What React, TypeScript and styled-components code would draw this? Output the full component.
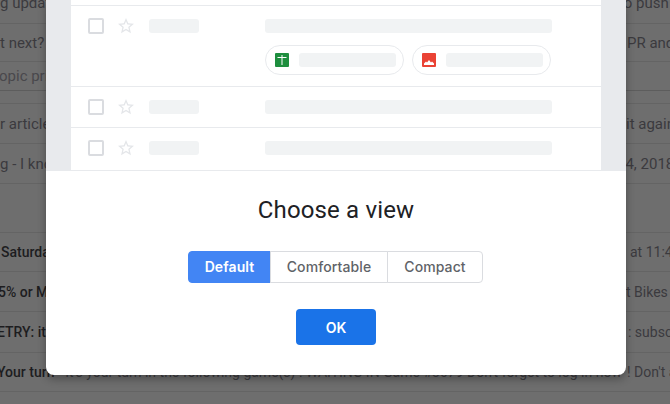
import React from 'react';
import styled, {createGlobalStyle} from 'styled-components';

const GlobalStyle = createGlobalStyle`
    html, body {
        margin: 0;
        height: 100%;
        overflow: hidden;
        background: #6e6e6e;
    }
    * {
        box-sizing: border-box;
    }
`;

const Page = styled.div`
    position: relative;
    width: 670px;
    height: 404px;
    overflow: hidden;
    font-family: Roboto, "Liberation Sans", sans-serif;
`;

const InboxList = styled.div`
    display: flex;
    flex-direction: column;
    margin-top: -17px;
`;

const InboxRow = styled.div<{$height: number; $faded?: boolean; $compact?: boolean}>`
    display: grid;
    grid-template-columns: 620px 50px;
    align-items: center;
    height: ${props => props.$height}px;
    border-bottom: 1px solid ${props => (props.$faded ? '#5d5d5d' : '#646464')};
    font-size: ${props => (props.$compact ? 14 : 15)}px;
    color: ${props => (props.$faded ? '#49484c' : '#3b3a3e')};
`;

const InboxText = styled.div<{$indent: number}>`
    overflow: hidden;
    white-space: nowrap;
    line-height: 20px;
    text-indent: ${props => props.$indent}px;
`;

const Strong = styled.span`
    font-weight: 500;
    color: #1d1d1f;
`;

const Dialog = styled.div`
    position: absolute;
    top: 0;
    left: 46px;
    width: 580px;
    height: 375px;
    display: flex;
    flex-direction: column;
    align-items: center;
    background: #fff;
    border-radius: 0 0 8px 8px;
    box-shadow: 0 4px 8px rgba(0, 0, 0, 0.3);
`;

const Preview = styled.div`
    align-self: stretch;
    height: 171px;
    padding: 0 25px;
    background: #e8eaed;
`;

const PreviewList = styled.div`
    display: flex;
    flex-direction: column;
    height: 100%;
    background: #fff;
`;

const PreviewStub = styled.div`
    height: 6px;
    border-bottom: 1px solid #e8eaed;
`;

const PreviewRow = styled.div<{$paddingBottom: number}>`
    display: flex;
    align-items: flex-start;
    padding: 12px 0 ${props => props.$paddingBottom}px 17px;
    border-bottom: 1px solid #e8eaed;
`;

const Checkbox = styled.div`
    flex: none;
    width: 16px;
    height: 16px;
    border: 2px solid #dadce0;
    border-radius: 2px;
`;

const Star = styled.svg`
    flex: none;
    width: 16px;
    height: 16px;
    margin-left: 14px;
    fill: #e4e6e9;
`;

const Skeleton = styled.div`
    height: 14px;
    border-radius: 3px;
    background: #f1f3f4;
`;

const SenderSkeleton = styled(Skeleton)`
    flex: none;
    width: 50px;
    margin: 1px 66px 0 15px;
`;

const RowBody = styled.div`
    flex: none;
    width: 287px;
    margin-top: 1px;
`;

const Chips = styled.div`
    display: flex;
    gap: 8px;
    margin-top: 12px;
`;

const Chip = styled.div`
    display: flex;
    align-items: center;
    gap: 10px;
    width: 139px;
    height: 30px;
    padding: 0 7px 0 9px;
    border: 1px solid #e8eaed;
    border-radius: 15px;
`;

const ChipIcon = styled.svg`
    flex: none;
    width: 14px;
    height: 14px;
`;

const ChipSkeleton = styled(Skeleton)`
    flex: 1;
`;

const Title = styled.h2`
    margin: 23px 0 25px;
    font-size: 24px;
    line-height: 32px;
    font-weight: 400;
    letter-spacing: 0.15px;
    color: #202124;
`;

const Density = styled.div`
    display: flex;
    height: 32px;
    margin-right: 1px;
    font-family: Inter, Roboto, sans-serif;
    font-size: 14px;
    font-weight: 500;
`;

const DensityOption = styled.button<{$width: number; $active?: boolean}>`
    width: ${props => props.$width}px;
    padding: 0 0 1px;
    margin-left: -1px;
    font: inherit;
    font-weight: ${props => (props.$active ? 600 : 500)};
    letter-spacing: 0.1px;
    color: ${props => (props.$active ? '#fff' : '#5f6368')};
    background: ${props => (props.$active ? '#4285f4' : '#fff')};
    border: 1px solid ${props => (props.$active ? '#4285f4' : '#dadce0')};

    &:first-child {
        margin-left: 0;
        border-radius: 4px 0 0 4px;
    }

    &:last-child {
        border-radius: 0 4px 4px 0;
    }
`;

const OkButton = styled.button`
    width: 80px;
    height: 36px;
    margin-top: 26px;
    font-family: Inter, Roboto, sans-serif;
    font-size: 14px;
    font-weight: 600;
    color: #fff;
    background: #1a73e8;
    border: none;
    border-radius: 4px;
`;

const STAR_PATH =
    'M22 9.24l-7.19-.62L12 2 9.19 8.63 2 9.24l5.46 4.73L5.82 21 12 17.27 18.18 21l-1.63-7.03L22 9.24zM12 15.4l-3.76 2.27 1-4.28-3.32-2.88 4.38-.38L12 6.1l1.71 4.04 4.38.38-3.32 2.88 1 4.28L12 15.4z';

interface InboxItem {
    height: number;
    left?: string;
    leftIndent?: number;
    strong?: boolean;
    rest?: string;
    right?: string;
    rightIndent?: number;
    faded?: boolean;
    compact?: boolean;
}

const inboxItems: InboxItem[] = [
    {height: 41, left: 'g updates', leftIndent: 0, right: 'to push', rightIndent: -1},
    {height: 38, left: 't next? -', leftIndent: 0, right: 'PR and', rightIndent: 7},
    {height: 29, left: 'opic prior', leftIndent: -1, faded: true},
    {height: 13},
    {height: 40, left: 'r articles', leftIndent: 0, right: 'it again', rightIndent: 6},
    {height: 40, left: 'g - I know', leftIndent: 0, right: '24, 2018', rightIndent: -3},
    {height: 49},
    {height: 39, left: 'Saturday', leftIndent: 1, strong: true, right: 'at 11:42', rightIndent: 10, compact: true},
    {height: 40, left: '5% or More', leftIndent: -2, strong: true, right: 't Bikes', rightIndent: 6, compact: true},
    {height: 41, left: 'ETRY: it', leftIndent: -3, strong: true, right: ': subscribe', rightIndent: 8, compact: true},
    {
        height: 39,
        left: 'Your turn',
        leftIndent: -3,
        strong: true,
        rest: " - It's your turn in the following game(s) : WAITING IN Game #3079 Don't forget to log in now",
        right: "! Don't a",
        rightIndent: 7,
        compact: true
    },
    {height: 40}
];

const StarIcon = () => (
    <Star viewBox="2 2 20 20">
        <path d={STAR_PATH} />
    </Star>
);

const SheetIcon = () => (
    <ChipIcon viewBox="0 0 14 14">
        <rect width="14" height="14" rx="1" fill="#1e8e3e" />
        <path d="M2.500 4h4V2h1v2h4v1h-4v7h-1V5h-4z" fill="#fff" />
    </ChipIcon>
);

const PictureIcon = () => (
    <ChipIcon viewBox="0 0 14 14">
        <rect width="14" height="14" rx="1" fill="#ea4335" />
        <path d="M2 12v-1.500L4 8.500l1 1 2-2.500 2 2.500 1-1 2 2V12z" fill="#fff" />
    </ChipIcon>
);

const App = () => (
    <Page>
        <GlobalStyle />
        <InboxList>
            {inboxItems.map((item, index) => (
                <InboxRow key={index} $height={item.height} $faded={item.faded} $compact={item.compact}>
                    <InboxText $indent={item.leftIndent ?? 0}>
                        {item.strong ? <Strong>{item.left}</Strong> : item.left}
                        {item.rest}
                    </InboxText>
                    <InboxText $indent={item.rightIndent ?? 0}>{item.right}</InboxText>
                </InboxRow>
            ))}
        </InboxList>
        <Dialog>
            <Preview>
                <PreviewList>
                    <PreviewStub />
                    <PreviewRow $paddingBottom={11}>
                        <Checkbox />
                        <StarIcon />
                        <SenderSkeleton />
                        <RowBody>
                            <Skeleton />
                            <Chips>
                                <Chip>
                                    <SheetIcon />
                                    <ChipSkeleton />
                                </Chip>
                                <Chip>
                                    <PictureIcon />
                                    <ChipSkeleton />
                                </Chip>
                            </Chips>
                        </RowBody>
                    </PreviewRow>
                    <PreviewRow $paddingBottom={12}>
                        <Checkbox />
                        <StarIcon />
                        <SenderSkeleton />
                        <RowBody>
                            <Skeleton />
                        </RowBody>
                    </PreviewRow>
                    <PreviewRow $paddingBottom={14}>
                        <Checkbox />
                        <StarIcon />
                        <SenderSkeleton />
                        <RowBody>
                            <Skeleton />
                        </RowBody>
                    </PreviewRow>
                </PreviewList>
            </Preview>
            <Title>Choose a view</Title>
            <Density>
                <DensityOption $width={83} $active>
                    Default
                </DensityOption>
                <DensityOption $width={118}>Comfortable</DensityOption>
                <DensityOption $width={96}>Compact</DensityOption>
            </Density>
            <OkButton>OK</OkButton>
        </Dialog>
    </Page>
);

export default App;
